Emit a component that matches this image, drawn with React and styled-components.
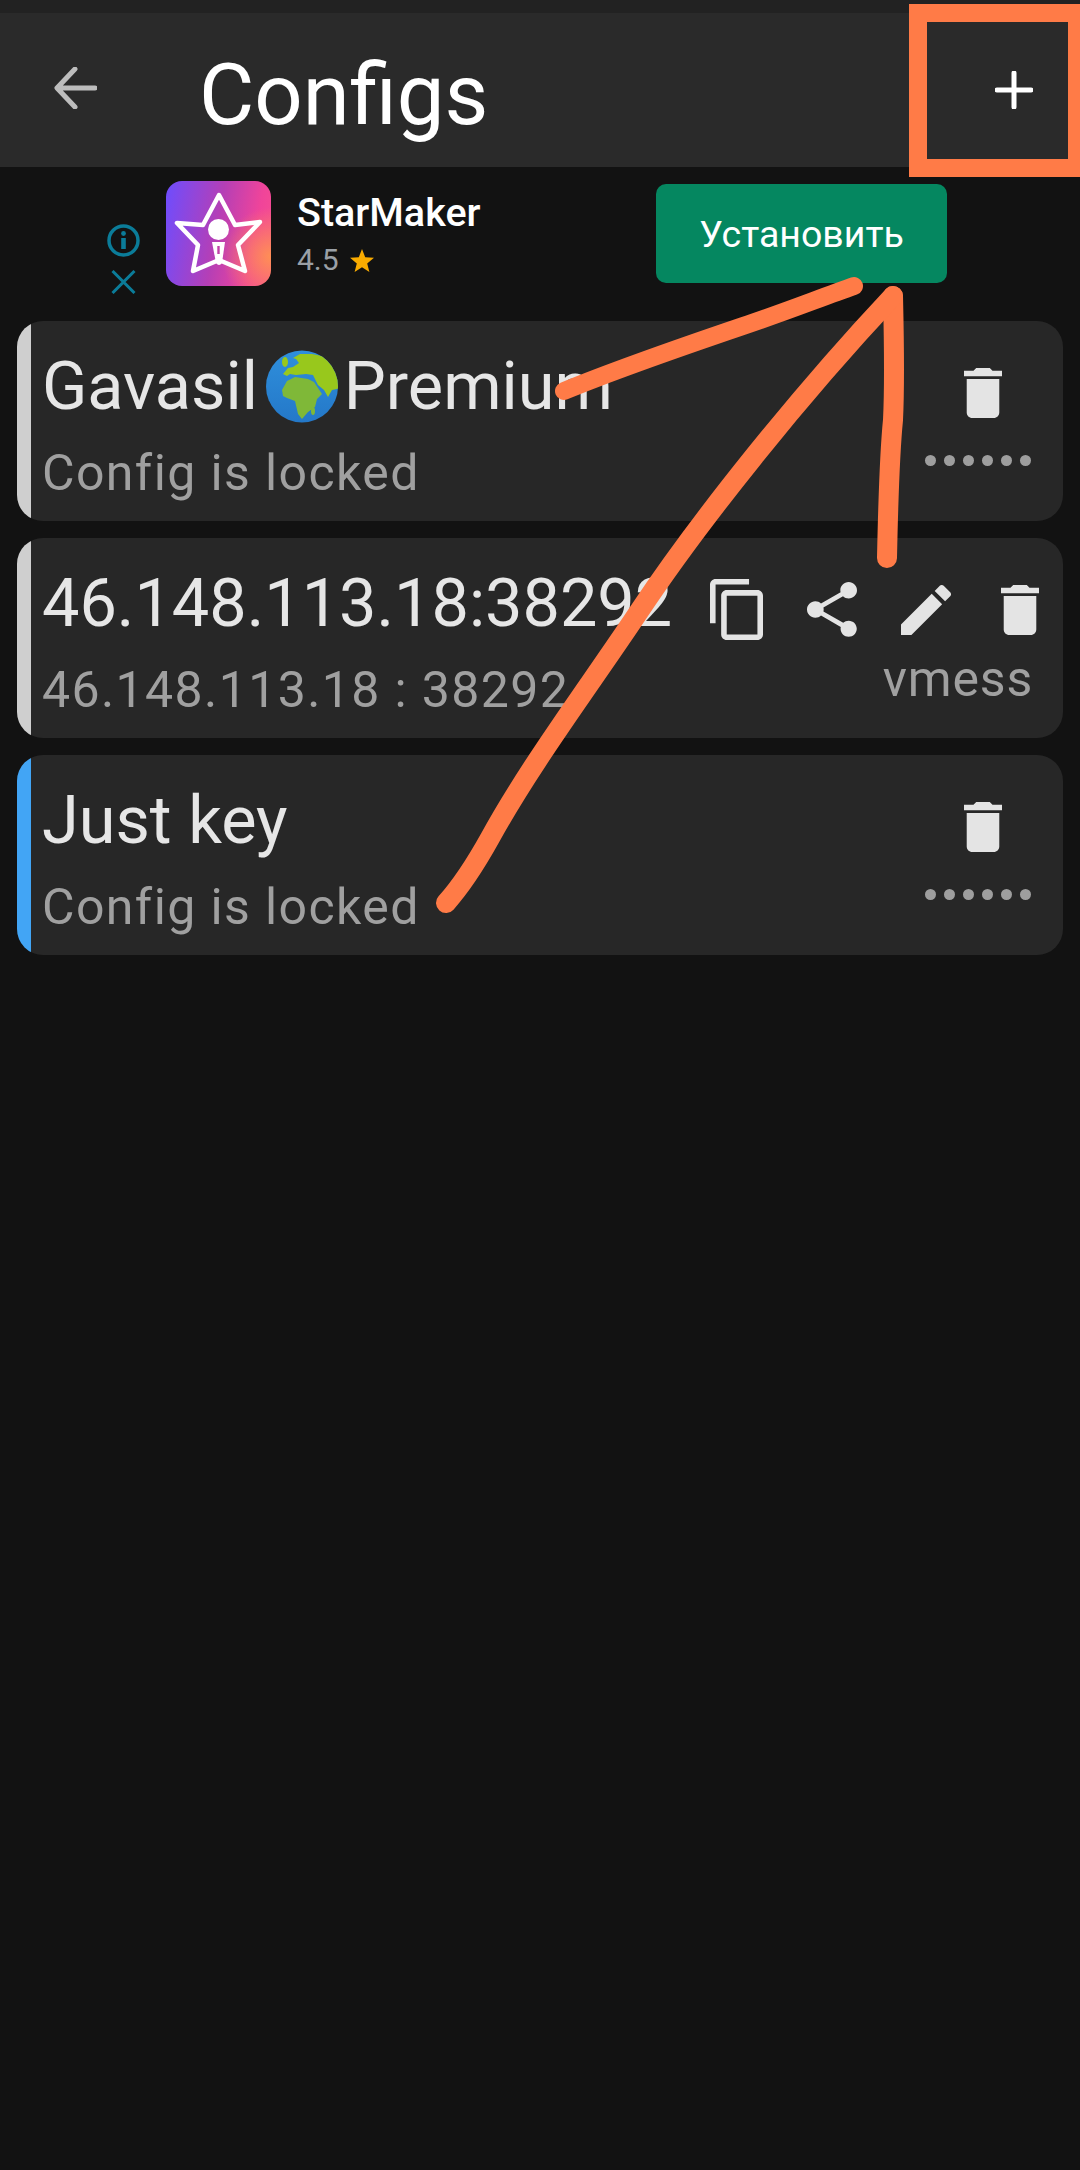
import React from 'react'
import styled, { createGlobalStyle } from 'styled-components'

const GlobalStyle = createGlobalStyle`
    html, body {
        margin: 0;
        padding: 0;
        background: #121212;
        font-family: Roboto, "Liberation Sans", sans-serif;
    }
`

const configs = [
    { id: 1, locked: true, stripe: '#cfcfcf', sub: 'Config is locked', title: <>Gavasil<Globe />Premium</> },
    { id: 2, locked: false, stripe: '#cfcfcf', sub: '46.148.113.18 : 38292', title: '46.148.113.18:38292' },
    { id: 3, locked: true, stripe: '#42a5f5', sub: 'Config is locked', title: 'Just key' },
]

function Globe() {
    return (
        <GlobeIcon viewBox="0 0 72 73">
            <defs>
                <linearGradient id="sea" x1="0" y1="0" x2="0" y2="1">
                    <stop offset="0" stopColor="#2f8fdc" />
                    <stop offset="1" stopColor="#2478c8" />
                </linearGradient>
                <clipPath id="earth">
                    <circle cx="36" cy="36.5" r="36" />
                </clipPath>
            </defs>
            <circle cx="36" cy="36.5" r="36" fill="url(#sea)" />
            <g clipPath="url(#earth)" fill="#98c81c">
                <path d="M27 8L34 4L46 4L56 6L76 10L76 38L66 40L62 47L58 40L52 35L47 25L40 24L30 25L24 24L21 26L17 24L22 18L27 17L33 13L30 9Z" />
                <path fill="#7fb838" d="M16 40L21 31L29 27L42 29L48 32L56 44L51 49L49 57L42 62L36 69L32 64L29 51L21 48L17 46Z" />
                <ellipse cx="19" cy="12" rx="3" ry="5" />
                <ellipse cx="47" cy="61" rx="2" ry="4" fill="#7fb838" />
            </g>
        </GlobeIcon>
    )
}

function TrashGlyph({ className }) {
    return (
        <svg className={className} viewBox="5 3 14 18" preserveAspectRatio="none">
            <path fill="currentColor" d="M6 19c0 1.1.9 2 2 2h8c1.1 0 2-.9 2-2V7H6v12zM19 4h-3.5l-1-1h-5l-1 1H5v2h14V4z" />
        </svg>
    )
}

function ConfigCard({ config }) {
    return (
        <Card>
            <Stripe $color={config.stripe} />
            <CardText>
                <Title>{config.title}</Title>
                <Subtitle>{config.sub}</Subtitle>
            </CardText>
            {config.locked ? (
                <LockedSide>
                    <LockedTrash />
                    <Dots>
                        {[0, 1, 2, 3, 4, 5].map((i) => <Dot key={i} />)}
                    </Dots>
                </LockedSide>
            ) : (
                <ActionSide>
                    <Actions>
                        <CopyIcon viewBox="2 1 19 22" preserveAspectRatio="none">
                            <path fill="currentColor" d="M16 1H4c-1.1 0-2 .9-2 2v14h2V3h12V1zm3 4H8c-1.1 0-2 .9-2 2v14c0 1.1.9 2 2 2h11c1.1 0 2-.9 2-2V7c0-1.1-.9-2-2-2zm0 16H8V7h11v14z" />
                        </CopyIcon>
                        <ShareIcon viewBox="3 2 18 20" preserveAspectRatio="none">
                            <path fill="currentColor" d="M18 16.08c-.76 0-1.44.3-1.96.77L8.91 12.7c.05-.23.09-.46.09-.7s-.04-.47-.09-.7l7.05-4.11c.54.5 1.25.81 2.04.81 1.66 0 3-1.34 3-3s-1.34-3-3-3-3 1.34-3 3c0 .24.04.47.09.7L8.04 9.81C7.5 9.31 6.79 9 6 9c-1.66 0-3 1.34-3 3s1.34 3 3 3c.79 0 1.5-.31 2.04-.81l7.12 4.16c-.05.21-.08.43-.08.65 0 1.61 1.31 2.92 2.92 2.92s2.92-1.31 2.92-2.92-1.31-2.92-2.92-2.92z" />
                        </ShareIcon>
                        <EditIcon viewBox="3 3 18 18">
                            <path fill="currentColor" d="M3 17.25V21h3.75L17.81 9.94l-3.75-3.75L3 17.25zM20.71 7.04c.39-.39.39-1.02 0-1.41l-2.34-2.34c-.39-.39-1.02-.39-1.41 0l-1.83 1.83 3.75 3.75 1.83-1.83z" />
                        </EditIcon>
                        <ActionTrash />
                    </Actions>
                    <Protocol>vmess</Protocol>
                </ActionSide>
            )}
        </Card>
    )
}

export default function App() {
    return (
        <Page>
            <GlobalStyle />
            <StatusBar />
            <Header>
                <BackIcon viewBox="0 0 43 42">
                    <path d="M41 21H4M21 2L3 21L21 40" fill="none" stroke="#bdbdbd" strokeWidth="5" strokeLinecap="round" strokeLinejoin="round" />
                </BackIcon>
                <HeaderTitle>Configs</HeaderTitle>
                <PlusIcon viewBox="0 0 38 38">
                    <path d="M19 2V36M2 19H36" stroke="#fff" strokeWidth="5" strokeLinecap="round" />
                </PlusIcon>
            </Header>

            <Ad>
                <AdControls>
                    <svg width="33" height="33" viewBox="0 0 33 33">
                        <circle cx="16.5" cy="16.5" r="14.5" fill="none" stroke="#0b7c99" strokeWidth="3.5" />
                        <circle cx="16.5" cy="9.5" r="2.4" fill="#0b7c99" />
                        <rect x="14.2" y="14" width="4.6" height="11" fill="#0b7c99" />
                    </svg>
                    <svg width="25" height="24" viewBox="0 0 25 24">
                        <path d="M1.5 1L23.5 23M23.5 1L1.5 23" stroke="#0b7c99" strokeWidth="3" />
                    </svg>
                </AdControls>
                <AppIcon>
                    <svg width="105" height="105" viewBox="0 0 105 105">
                        <path d="M53 14L69 44L94 41L72 64L79 90L53 79L27 90L32 64L11 42L37 44Z" fill="none" stroke="#fff" strokeWidth="4.5" strokeLinejoin="round" />
                        <circle cx="52.5" cy="48.5" r="10.5" fill="#fff" />
                        <path d="M46 61H59L56 82Q53 86 50 82Z" fill="#fff" />
                        <rect x="51.3" y="65" width="2.4" height="8" fill="#c040a8" />
                    </svg>
                </AppIcon>
                <AdText>
                    <AppName>StarMaker</AppName>
                    <Rating>
                        4.5
                        <svg width="24" height="23" viewBox="0 0 24 23">
                            <path d="M12 0L15.2 8.2L24 8.8L17.2 14.4L19.4 23L12 18.2L4.6 23L6.8 14.4L0 8.8L8.8 8.2Z" fill="#f9ab00" />
                        </svg>
                    </Rating>
                </AdText>
                <InstallButton>Установить</InstallButton>
            </Ad>

            <CardList>
                {configs.map((config) => <ConfigCard key={config.id} config={config} />)}
            </CardList>

            <HighlightBox />
            <Scribble viewBox="0 0 1080 2170">
                <g fill="none" stroke="#ff7b47" strokeLinecap="round" strokeLinejoin="round">
                    <path strokeWidth="18" d="M564 391C620 368 690 344 743 326C785 312 820 298 854 286" />
                    <path strokeWidth="20" d="M893 296C894 340 895 380 893 420C889 460 888 510 887 558" />
                    <path strokeWidth="20" d="M893 296C800 395 700 520 640 610C590 685 530 765 490 838C475 865 462 885 446 903" />
                </g>
            </Scribble>
        </Page>
    )
}

const Page = styled.div`
    position: relative;
    width: 1080px;
    height: 2170px;
    overflow: hidden;
    background: #121212;
`

const StatusBar = styled.div`
    height: 13px;
    background: #222222;
`

const Header = styled.header`
    display: flex;
    align-items: center;
    height: 154px;
    padding: 0 47px 0 54px;
    background: #2a2a2a;
`

const BackIcon = styled.svg`
    width: 43px;
    height: 42px;
    margin-top: -4px;
`

const HeaderTitle = styled.h1`
    margin: 0 0 0 102px;
    padding-top: 10px;
    font-size: 85px;
    font-weight: 400;
    color: #ffffff;
`

const PlusIcon = styled.svg`
    width: 38px;
    height: 38px;
    margin-left: auto;
`

const Ad = styled.section`
    display: flex;
    align-items: flex-start;
    height: 154px;
    padding: 14px 133px 0 107px;
    box-sizing: border-box;
`

const AdControls = styled.div`
    display: flex;
    flex-direction: column;
    align-items: center;
    gap: 13px;
    margin-top: 43px;
`

const AppIcon = styled.div`
    width: 105px;
    height: 105px;
    margin-left: 26px;
    border-radius: 16px;
    background:
        radial-gradient(circle at 100% 72%, #ff8f55 0, rgba(255, 120, 110, 0) 38%),
        linear-gradient(100deg, #6d4dff 0, #b53fb6 48%, #f0449a 80%, #f8508f 100%);
`

const AdText = styled.div`
    display: flex;
    flex-direction: column;
    margin-left: 26px;
    padding-top: 9px;
`

const AppName = styled.div`
    font-size: 39.5px;
    line-height: 46px;
    font-weight: 500;
    color: #ffffff;
`

const Rating = styled.div`
    display: flex;
    align-items: center;
    gap: 11px;
    margin-top: 8px;
    font-size: 30px;
    line-height: 32px;
    color: #9aa0a6;
`

const InstallButton = styled.button`
    width: 291px;
    height: 99px;
    margin: 3px 0 0 auto;
    border: 0;
    border-radius: 10px;
    background: #058760;
    font-family: inherit;
    font-size: 37.5px;
    color: #ffffff;
`

const CardList = styled.div`
    display: flex;
    flex-direction: column;
    gap: 17px;
    padding: 0 17px;
`

const Card = styled.article`
    display: flex;
    height: 200px;
    overflow: hidden;
    border-radius: 26px;
    background: #272727;
`

const Stripe = styled.div`
    flex: 0 0 14px;
    background: ${(props) => props.$color};
`

const CardText = styled.div`
    flex: 1;
    min-width: 0;
    padding: 24px 0 0 11px;
`

const Title = styled.div`
    display: flex;
    align-items: center;
    font-size: 66.6px;
    line-height: 82px;
    color: #e6e6e6;
    white-space: nowrap;
`

const GlobeIcon = styled.svg`
    width: 72px;
    height: 73px;
    margin: 0 6px 0 8px;
`

const Subtitle = styled.div`
    margin-top: 5px;
    font-size: 50px;
    line-height: 82px;
    letter-spacing: 1.4px;
    color: #a0a0a0;
    white-space: nowrap;
`

const LockedSide = styled.div`
    display: flex;
    flex-direction: column;
    align-items: center;
    padding: 47px 32px 0 0;
`

const LockedTrash = styled(TrashGlyph)`
    width: 38px;
    height: 50px;
    margin-left: 10px;
    color: #e4e4e4;
`

const Dots = styled.div`
    display: flex;
    gap: 8px;
    margin-top: 37px;
`

const Dot = styled.span`
    width: 11px;
    height: 11px;
    border-radius: 50%;
    background: #9e9e9e;
`

const ActionSide = styled.div`
    display: flex;
    flex-direction: column;
    align-items: flex-end;
    padding: 41px 24px 0 0;
`

const Actions = styled.div`
    display: flex;
    align-items: center;
    color: #e4e4e4;
`

const CopyIcon = styled.svg`
    width: 53px;
    height: 61px;
`

const ShareIcon = styled.svg`
    width: 50px;
    height: 55px;
    margin-left: 44px;
`

const EditIcon = styled.svg`
    width: 50px;
    height: 50px;
    margin-left: 44px;
`

const ActionTrash = styled(TrashGlyph)`
    width: 38px;
    height: 50px;
    margin-left: 50px;
`

const Protocol = styled.div`
    margin: 9px 6px 0 0;
    font-size: 50px;
    line-height: 60px;
    letter-spacing: 0.8px;
    color: #a0a0a0;
`

const HighlightBox = styled.div`
    position: absolute;
    top: 4px;
    left: 909px;
    width: 171px;
    height: 173px;
    box-sizing: border-box;
    border: solid #ff7b47;
    border-width: 18px 12px 18px 18px;
`

const Scribble = styled.svg`
    position: absolute;
    top: 0;
    left: 0;
    width: 1080px;
    height: 2170px;
    pointer-events: none;
`
